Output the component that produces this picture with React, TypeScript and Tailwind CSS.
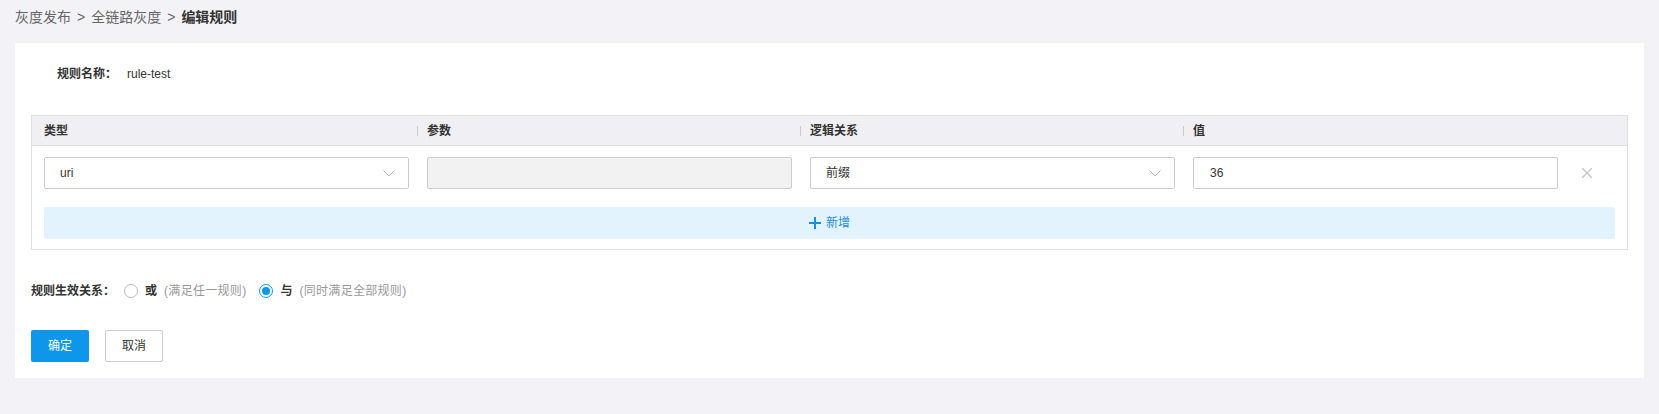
import { X } from "lucide-react";

const font = { fontFamily: '"Liberation Sans", "Noto Sans CJK SC", sans-serif' };

function Chevron() {
  return (
    <svg width="12" height="7" viewBox="0 0 12 7" fill="none">
      <path d="M0.5 0.5L6 6L11.5 0.5" stroke="#b8b8b8" strokeWidth="1" />
    </svg>
  );
}

function Select({ value }: { value: string }) {
  return (
    <div className="flex h-8 items-center justify-between rounded-[2px] border border-[#cccccc] bg-white pl-[15px] pr-[13px] text-xs text-[#333333]">
      <span>{value}</span>
      <Chevron />
    </div>
  );
}

function Input({ value, disabled }: { value?: string; disabled?: boolean }) {
  return (
    <div
      className={
        disabled
          ? "h-8 rounded-[2px] border border-[#cccccc] bg-[#f2f2f2]"
          : "flex h-8 items-center rounded-[2px] border border-[#cccccc] bg-white pl-[16px] text-xs text-[#333333]"
      }
    >
      {value}
    </div>
  );
}

function Radio({ checked, label, hint }: { checked?: boolean; label: string; hint: string }) {
  return (
    <label className="flex items-center">
      {checked ? (
        <span className="flex h-[14px] w-[14px] items-center justify-center rounded-full border border-[#0e96eb] bg-white">
          <span className="h-2 w-2 rounded-full bg-[#0e96eb]" />
        </span>
      ) : (
        <span className="h-[14px] w-[14px] rounded-full border border-[#bbbbbb] bg-white" />
      )}
      <span className="ml-[7px] font-bold text-[#333333]">{label}</span>
      <span className="ml-[7px] tracking-[0.3px] text-[#999999]">({hint})</span>
    </label>
  );
}

const headers = ["类型", "参数", "逻辑关系", "值"];

export default function App() {
  return (
    <div className="min-h-[414px] bg-[#f3f3f7] px-[15px] pt-[7px] pb-9" style={font}>
      {/* breadcrumb */}
      <div className="flex h-5 items-center text-sm text-[#666666]">
        <span>灰度发布</span>
        <span className="mx-[6px]">&gt;</span>
        <span>全链路灰度</span>
        <span className="mx-[6px]">&gt;</span>
        <span className="font-semibold text-[#333333]">编辑规则</span>
      </div>

      <div className="mt-4 bg-white px-4 pt-[21px] pb-4 text-xs">
        <div className="flex h-5 items-center pl-[26px]">
          <span className="font-bold text-[#333333]">规则名称：</span>
          <span className="ml-[10px] text-[#333333]">rule-test</span>
        </div>

        {/* rule table */}
        <div className="mt-[31px] border border-[#e0e0e0]">
          <div className="flex h-[30px] items-center border-b border-[#e0e0e0] bg-[#f0f0f4] px-3">
            <div className="grid grid-cols-[365px_365px_365px_365px] gap-x-[18px]">
              {headers.map((h, i) => (
                <div key={h} className="relative font-bold text-[#333333]">
                  {i > 0 && (
                    <span className="absolute top-1/2 left-[-10px] h-[10px] w-px -translate-y-1/2 bg-[#cccccc]" />
                  )}
                  {h}
                </div>
              ))}
            </div>
          </div>

          <div className="px-3 pt-[11px] pb-[10px]">
            <div className="flex">
              <div className="grid grid-cols-[365px_365px_365px_365px] gap-x-[18px]">
                <Select value="uri" />
                <Input disabled />
                <Select value="前缀" />
                <Input value="36" />
              </div>
              <div className="flex flex-1 items-center justify-center">
                <X size={18} strokeWidth={2} className="text-[#c8c8c8]" />
              </div>
            </div>

            <button className="mt-[18px] flex h-8 w-full items-center justify-center gap-[5px] rounded-[2px] bg-[#e3f3fd] text-xs text-[#1a8fe0]">
              <svg width="12" height="12" viewBox="0 0 12 12">
                <path d="M6 0v12M0 6h12" stroke="#1a8fe0" strokeWidth="2" />
              </svg>
              新增
            </button>
          </div>
        </div>

        {/* relation */}
        <div className="mt-[31px] flex h-5 items-center">
          <span className="font-bold text-[#333333]">规则生效关系：</span>
          <div className="ml-[9px] flex items-center gap-[13px]">
            <Radio label="或" hint="满足任一规则" />
            <Radio checked label="与" hint="同时满足全部规则" />
          </div>
        </div>

        <div className="mt-[29px] flex gap-4">
          <button className="h-8 w-[58px] rounded-[2px] bg-[#0e96eb] text-xs text-white">确定</button>
          <button className="h-8 w-[58px] rounded-[2px] border border-[#cccccc] bg-white text-xs text-[#333333]">
            取消
          </button>
        </div>
      </div>
    </div>
  );
}
